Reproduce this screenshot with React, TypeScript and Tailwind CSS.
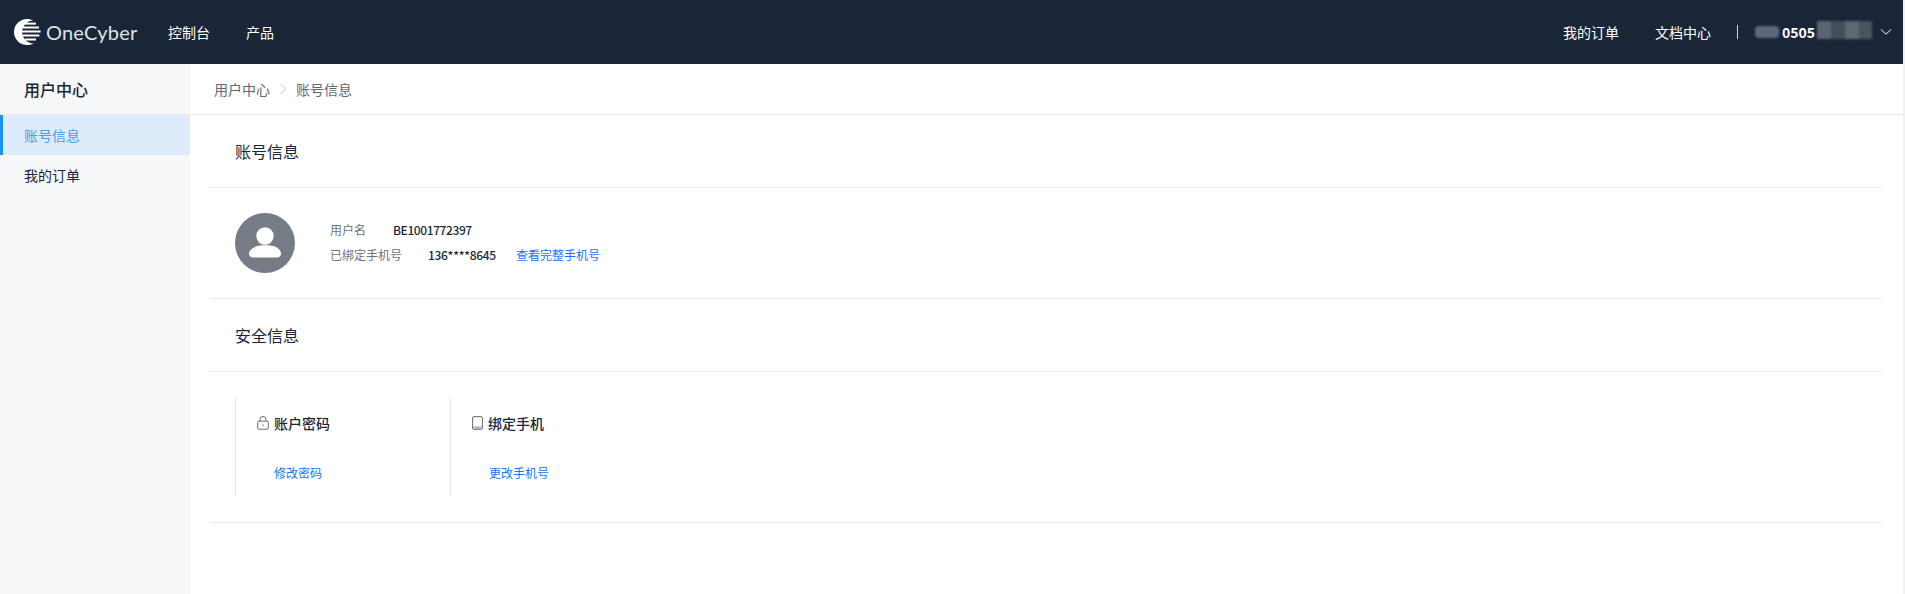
import React from "react";

const font = { fontFamily: '"Noto Sans CJK SC", "Inter", sans-serif' };

function Logo() {
  return (
    <svg width="27" height="26" viewBox="0 0 27 26" className="shrink-0">
      <path fillRule="evenodd" d="M13 0 A13 13 0 1 0 13 26 C15.5 26 17.5 25.4 19.5 24.4 A11.4 11.4 0 1 1 19.5 1.6 C17.5 0.6 15.5 0 13 0 Z" fill="#ffffff" />
      <rect x="11" y="3.6" width="11" height="2" fill="#ffffff" />
      <rect x="8.4" y="7.5" width="16.6" height="2" fill="#ffffff" />
      <rect x="7" y="11.5" width="19.6" height="2" fill="#ffffff" />
      <rect x="8.4" y="15.5" width="17" height="2" fill="#ffffff" />
      <rect x="11" y="19.5" width="11" height="2" fill="#ffffff" />
    </svg>
  );
}

function LockIcon() {
  return (
    <svg width="12" height="14" viewBox="0 0 12 14" fill="none" className="shrink-0">
      <rect x="0.7" y="5.2" width="10.6" height="8" rx="1" stroke="#5f6b7a" strokeWidth="1" />
      <path d="M3 5V3.5a3 3 0 0 1 6 0V5" stroke="#5f6b7a" strokeWidth="1" />
      <rect x="5.5" y="8" width="1" height="2.6" fill="#c98a4b" />
    </svg>
  );
}

function PhoneIcon() {
  return (
    <svg width="11" height="14" viewBox="0 0 11 14" fill="none" className="shrink-0">
      <rect x="0.6" y="0.6" width="9.8" height="12.8" rx="1.4" stroke="#5f6b7a" strokeWidth="1" />
      <rect x="1" y="10.4" width="9" height="2.8" fill="#b9bec6" />
      <rect x="5" y="11.2" width="1" height="1" fill="#5f6b7a" />
    </svg>
  );
}

function Avatar() {
  return (
    <div className="w-[60px] h-[60px] rounded-full bg-[#757c85] flex items-center justify-center shrink-0">
      <svg width="34" height="34" viewBox="0 0 34 34">
        <circle cx="17" cy="10" r="8.7" fill="#fff" />
        <path d="M8 20.5 C11 19.5 13 19.3 17 19.3 C21 19.3 24 19.6 27 20.6 C31 22.4 33 25 33 27.5 C33 30 31.5 31.5 29 31.5 L5 31.5 C2.5 31.5 1 30 1 27.5 C1 25 4 22 8 20.5Z" fill="#fff" />
      </svg>
    </div>
  );
}

function Title({ children }: { children: React.ReactNode }) {
  return (
    <div className="h-[73px] pl-[25px] flex items-center border-b border-[#ebedf0] text-base text-[#1a2638]">
      {children}
    </div>
  );
}

function SecurityCard({ icon, title, link, width }: { icon: React.ReactNode; title: string; link: string; width: string }) {
  return (
    <div className={`h-[100px] border-l border-[#e8eaed] pl-[21px] pt-[17px] ${width}`}>
      <div className="flex items-center h-[18px] gap-[5px] text-[#1a2638]">
        {icon}
        <span className="text-sm font-medium leading-[18px]">{title}</span>
      </div>
      <a className="block mt-[32px] pl-[17px] text-xs leading-[18px] text-[#1a73f0]">{link}</a>
    </div>
  );
}

export default function App() {
  return (
    <div className="h-[594px] w-[1905px] overflow-hidden flex flex-col bg-white border-r-2 border-[#f0f0f0]" style={font}>
      <header className="h-16 shrink-0 bg-[#1a2638] flex items-center text-sm text-white">
        <div className="flex items-center pl-[14px] gap-[5px] w-[168px]">
          <Logo />
          <span className="text-[20px] leading-none text-[#dfe2e5] tracking-[0.2px]" style={{ fontFamily: '"Lato", sans-serif' }}>OneCyber</span>
        </div>
        <nav className="flex gap-9">
          <a>控制台</a>
          <a>产品</a>
        </nav>
        <div className="ml-auto flex items-center pr-[11px]">
          <a>我的订单</a>
          <a className="ml-9">文档中心</a>
          <div className="w-px h-[14px] bg-[#d5d8dc] ml-[26px]" />
          <div className="relative ml-[17px] w-[117px] h-5 flex items-center">
            <span className="absolute left-[27px] text-sm font-bold">0505</span>
            <div className="absolute left-[0px] top-[4px] w-[24px] h-3 bg-[#5d6977] rounded-sm blur-[1px]" />
            <div className="absolute left-[62px] top-[-1px] flex blur-[0.8px]">
              <div className="w-[14px] h-[18px] bg-[#5a6573]" />
              <div className="w-[14px] h-[18px] bg-[#474c5a]" />
              <div className="w-[14px] h-[18px] bg-[#5c6874]" />
              <div className="w-[13px] h-[18px] bg-[#4a535f]" />
            </div>
          </div>
          <svg width="12" height="8" viewBox="0 0 12 8" fill="none" className="ml-[8px]">
            <path d="M1 1.5 L6 6.2 L11 1.5" stroke="#ffffff" strokeWidth="1" />
          </svg>
        </div>
      </header>
      <div className="flex flex-1">
        <aside className="w-[190px] bg-[#f5f7f9] shrink-0">
          <div className="h-[51px] pl-6 flex items-center border-b border-[#ebedf0] text-base font-medium text-[#1a2638]">用户中心</div>
          <div className="h-10 pl-[21px] flex items-center border-l-[3px] border-[#1890ff] bg-[#deebfa] text-sm text-[#4a9cf0]">账号信息</div>
          <div className="h-10 pl-6 flex items-center text-sm text-[#1a2638]">我的订单</div>
        </aside>
        <main className="flex-1 min-w-0">
          <div className="h-[51px] pl-[24px] flex items-center border-b border-[#ebedf0] text-sm text-[#5f6873]">
            <span>用户中心</span>
            <svg width="8" height="12" viewBox="0 0 8 12" fill="none" className="mx-[9px]">
              <path d="M1.5 1 L6.5 6 L1.5 11" stroke="#c5cad1" strokeWidth="1" />
            </svg>
            <span>账号信息</span>
          </div>
          <div className="ml-5 mr-5">
            <Title>账号信息</Title>
            <div className="h-[111px] border-b border-[#ebedf0] pl-[25px] flex items-center">
              <Avatar />
              <div className="ml-[35px] text-xs pb-[2px]">
                <div className="flex items-center h-[25px]">
                  <span className="text-[#6b7480] w-[63px]">用户名</span>
                  <span className="text-[#1a2638] font-medium tracking-[-0.4px]">BE1001772397</span>
                </div>
                <div className="flex items-center h-[25px]">
                  <span className="text-[#6b7480] w-[98px]">已绑定手机号</span>
                  <span className="text-[#1a2638] font-medium w-[88px] tracking-[-0.3px]">136****8645</span>
                  <a className="text-[#1a73f0]">查看完整手机号</a>
                </div>
              </div>
            </div>
            <Title>安全信息</Title>
            <div className="h-[151px] border-b border-[#ebedf0] pl-[25px] pt-[25px] flex items-start">
              <SecurityCard icon={<LockIcon />} title="账户密码" link="修改密码" width="w-[215px]" />
              <SecurityCard icon={<PhoneIcon />} title="绑定手机" link="更改手机号" width="w-[215px]" />
            </div>
          </div>
        </main>
      </div>
    </div>
  );
}
